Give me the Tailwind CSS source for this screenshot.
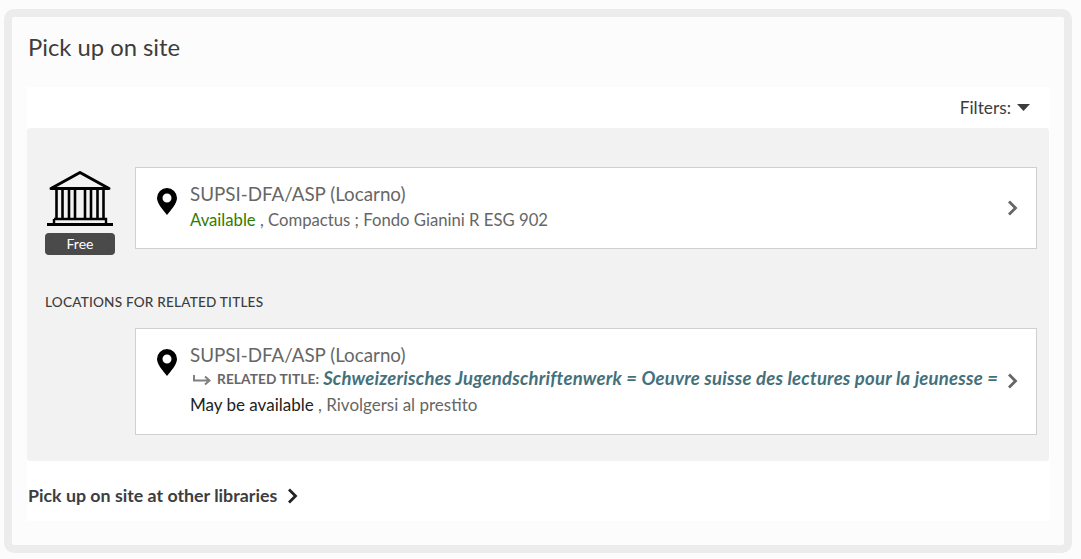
<!DOCTYPE html>
<html lang="en">
<head>
  <meta charset="UTF-8" />
  <title>Pick up on site</title>
  <script src="https://cdn.jsdelivr.net/npm/@tailwindcss/browser@4"></script>
</head>
<body class="bg-[#fcfcfc] font-['Lato','Liberation_Sans',sans-serif] text-[#3d3d3d]">
  <div class="w-[1081px] h-[559px] overflow-hidden pt-[9px] pl-[4px]">
    <!-- Outer frame -->
    <div class="w-[1068px] h-[544px] border-8 border-[#ececec] rounded-[10px] bg-[#fcfcfc] pl-[15px] pr-[14px]">
      <h2 class="h-[70px] pt-[12px] pl-px text-[23.8px] leading-[36px] text-[#3d3d3d]">Pick up on site</h2>

      <div class="bg-white w-[1023px] h-[434px]">
        <!-- Filters -->
        <div class="h-[41px] flex items-center justify-end pr-[20px] gap-[6px] text-[17.300px] text-[#3d3d3d]">
          <span>Filters:</span>
          <svg width="13" height="7" viewBox="0 0 13 7"><path d="M0 0h13L6.500 7z" fill="#3d3d3d"/></svg>
        </div>

        <!-- Locations panel -->
        <div class="bg-[#f2f2f2] w-[1022px] h-[333px] rounded-[3px] pl-[18px] pr-[12px]">
          <div class="h-[39px]"></div>
          <div class="flex h-[82px]">
            <div class="w-[70px] shrink-0 flex flex-col items-center">
              <svg width="66" height="56" viewBox="0 0 66 56" class="mt-[3px] shrink-0" fill="none" stroke="#000">
                <path d="M4 18.500 33 2.500l29 16H4z" stroke-width="3" stroke-linejoin="round"/>
                <path d="M9.500 19v29M15.500 19v29M22 19v29M28 19v29M38 19v29M44 19v29M50.500 19v29M56.500 19v29" stroke-width="2.600"/>
                <path d="M7 49h52v5M7 49v5" stroke-width="2.400"/>
                <path d="M0 54.500h66" stroke-width="3"/>
              </svg>
              <span class="mt-[7px] w-[70px] h-[22px] shrink-0 rounded-[4px] bg-[#4a4a4a] text-white text-[14px] leading-[22px] text-center">Free</span>
            </div>
            <a class="ml-[20px] flex-1 border border-[#d0d0d0] bg-white flex items-center pl-[21px] pr-[18px]">
              <svg width="20" height="27" viewBox="0 0 20 27" class="shrink-0 -mt-[13px]"><path fill-rule="evenodd" d="M10 0a10 10 0 0 1 10 10c0 5.500-6 12-10 17C6 22 0 15.500 0 10A10 10 0 0 1 10 0zm0 5.500a4.500 4.500 0 1 0 0 9 4.500 4.500 0 0 0 0-9z" fill="#000"/></svg>
              <div class="ml-[13px] flex-1 -mt-[3px]">
                <div class="text-[18.800px] leading-[26px] text-[#666]">SUPSI-DFA/ASP (Locarno)</div>
                <div class="text-[16.700px] leading-[24px] text-[#666] mt-px"><span class="text-[#2f7d00]">Available</span> , Compactus ; Fondo Gianini R ESG 902</div>
              </div>
              <svg width="11" height="16" viewBox="0 0 11 16" fill="none" stroke="#666" stroke-width="2.800"><path d="M2 1.500 8.500 8 2 14.500"/></svg>
            </a>
          </div>

          <div class="mt-[45px] h-[16px] text-[13.600px] leading-[16px] font-medium text-[#3d3d3d] tracking-[0.2px]">LOCATIONS FOR RELATED TITLES</div>

          <div class="mt-[18px] ml-[90px] h-[107px] border border-[#d0d0d0] bg-white flex pl-[21px] pr-[18px] pt-[13px]">
            <svg width="20" height="27" viewBox="0 0 20 27" class="shrink-0 mt-[7px]"><path fill-rule="evenodd" d="M10 0a10 10 0 0 1 10 10c0 5.500-6 12-10 17C6 22 0 15.500 0 10A10 10 0 0 1 10 0zm0 5.500a4.500 4.500 0 1 0 0 9 4.500 4.500 0 0 0 0-9z" fill="#000"/></svg>
            <div class="ml-[13px] w-[808px] min-w-0">
              <div class="text-[18.800px] leading-[26px] text-[#666]">SUPSI-DFA/ASP (Locarno)</div>
              <div class="flex items-center h-[24px] -mt-px whitespace-nowrap overflow-hidden">
                <svg width="18" height="12" viewBox="0 0 18 12" fill="none" stroke="#808080" stroke-width="2" class="shrink-0 ml-[3px] mt-[3px]"><path d="M1 0v5.500h15M12 1.500l4.500 4-4.500 4"/></svg>
                <span class="ml-[6px] text-[13.700px] font-bold text-[#666] tracking-[0.1px]">RELATED TITLE:</span>
                <span class="ml-[4px] text-[18.500px] font-bold italic text-[#44707b] tracking-[0.22px]">Schweizerisches Jugendschriftenwerk = Oeuvre suisse des lectures pour la jeunesse =</span>
              </div>
              <div class="text-[17px] leading-[24px] text-[#666] mt-[2px]"><span class="text-[#222]">May be available</span> , Rivolgersi al prestito</div>
            </div>
            <svg width="11" height="16" viewBox="0 0 11 16" fill="none" stroke="#666" stroke-width="2.800" class="ml-auto mt-[31px]"><path d="M2 1.500 8.500 8 2 14.500"/></svg>
          </div>
        </div>

        <!-- Other libraries -->
        <a class="h-[60px] pl-px pt-[8px] flex items-center gap-[10px] text-[17.800px] font-bold text-[#3d3d3d]">
          <span>Pick up on site at other libraries</span>
          <svg width="11" height="16" viewBox="0 0 11 16" fill="none" stroke="#222" stroke-width="2.800" class="mt-[2px]"><path d="M2 1.500 8.500 8 2 14.500"/></svg>
        </a>
      </div>
    </div>
  </div>
</body>
</html>
